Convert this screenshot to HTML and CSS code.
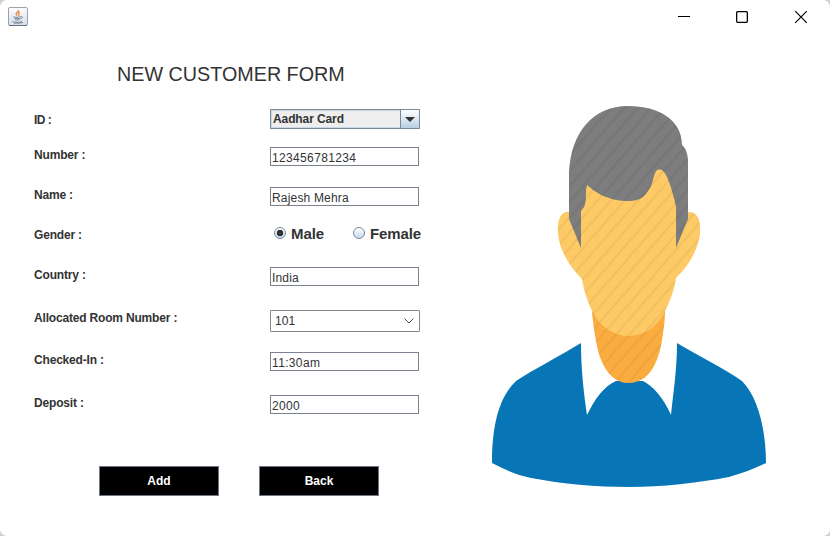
FILE: index.html
```html
<!DOCTYPE html>
<html lang="en">
<head>
<meta charset="utf-8">
<title>New Customer Form</title>
<link rel="stylesheet" href="styles.css">
</head>
<body>
<div class="window">
  <header class="titlebar">
    <svg class="java" width="20" height="20" viewBox="0 0 20 20" fill="none">
      <defs><linearGradient id="tile" x1="0" y1="0" x2="0" y2="1"><stop offset="0" stop-color="#fdfdfe"/><stop offset="1" stop-color="#d3dee8"/></linearGradient></defs>
      <rect x=".5" y=".5" width="19" height="18" rx="1.500" fill="url(#tile)" stroke="#9aa4ae"/>
      <path d="M1 18.500h18" stroke="#66737f"/>
      <path d="M10.500 3c.8 2-3.300 2.700-2.300 4.400l1 1.300M12 5c-2 .8-2.200 1.600-1.200 2.300.5.600.2 1-.6 1.500" stroke="#e88a42" stroke-width="1.300"/>
      <path d="M5.500 9.500c-1.500 1 6 1 7.300.1M6.300 11.300h5.800M7 12.900h4.500M12.800 9.600c2.500-.5 2.200 1.600-.4 2.200M4.500 14.400c0 1.300 8 1.300 9.500 0M6 16c3 .3 7 .2 9-.7" stroke="#768694"/>
    </svg>
    <svg class="controls" width="132" height="14" viewBox="0 0 132 14" fill="none" stroke="#000">
      <path d="M0 6.500h12"/>
      <rect x="58.650" y="1.650" width="10.700" height="10.700" rx="1" stroke-width="1.300"/>
      <path d="M117.200 1.200l11.600 11.600M128.800 1.200l-11.600 11.600" stroke-width="1.200"/>
    </svg>
  </header>
  <main class="content">
    <form class="form">
      <h1>NEW CUSTOMER FORM</h1>
      <div class="fields">
        <span class="label label-id">ID :</span>
        <div class="combo metal"><span>Aadhar Card</span><i><svg width="10" height="5" viewBox="0 0 10 5"><path d="M0 0h10L5 5z" fill="#333"/></svg></i></div>
        <span class="label">Number :</span><div class="input">123456781234</div>
        <span class="label">Name :</span><div class="input name">Rajesh Mehra</div>
        <span class="label">Gender :</span>
        <div class="radios">
          <span class="radio male"><i class="dot on"></i><b>Male</b></span>
          <span class="radio"><i class="dot"></i><b>Female</b></span>
        </div>
        <span class="label">Country :</span><div class="input name">India</div>
        <span class="label">Allocated Room Number :</span>
        <div class="combo native"><span>101</span><svg width="10" height="6" viewBox="0 0 10 6" fill="none" stroke="#555"><path d="M.5.5L5 5 9.500.5"/></svg></div>
        <span class="label">Checked-In :</span><div class="input">11:30am</div>
        <span class="label">Deposit :</span><div class="input">2000</div>
      </div>
      <div class="actions"><button type="button">Add</button><button type="button">Back</button></div>
    </form>
    <svg class="portrait" width="276" height="382" viewBox="491 105 276 382">
      <defs>
        <pattern id="stripes" width="10.200" height="10.200" patternUnits="userSpaceOnUse" patternTransform="rotate(41)"><path d="M0 0h2v10.200H0z" fill="#7b6030" opacity=".1"/></pattern>
        <pattern id="hair-stripes" width="10.200" height="10.200" patternUnits="userSpaceOnUse" patternTransform="rotate(41)"><path d="M0 0h2.500v10.200H0z" fill="#000" opacity=".05"/></pattern>
        <path id="neck" d="M592 304V312C593 322 594 331 596 341C598 352 600 358 603 364C608 375 617 383 628 383C641 383 650 375 655 364C660 354 662 341 663 334C664 326 665 319 665 312V304Z"/>
        <path id="face" d="M570 212C560 210 557 222 558 233C559 250 570 267 582 279C584 292 588 302 592 311C600 327 614 336 629 336C643 336 657 328 665 311C670 301 674 291 676 278C689 266 698 249 700 234C701 220 698 211 687 212L660 160H587Z"/>
        <path id="hair" d="M569 173C571 132 593 106 628 106C659 106 682 120 682 145C686 148 688 155 688 162V219L676 248V206C672 190 667 170 660 169.500C653 168 655 182 648 191C643 199 637 201 628 201C611 201 598 195 587 185C585 191 587 202 584 207L581 211V248L569 219Z"/>
      </defs>
      <path fill="#0875b7" d="M581 343C560 356 534 369 516 381C499 397 492 425 492 463C505 470 517 475 531 478C563 484 595 487 629 487C663 487 697 483 729 477C743 473 755 468 766 463C766 430 758 397 742 381C724 368 698 356 677 343C677 370 673 395 671 415C663 397 653 386 643 381H616C603 387 595 399 587 415C584 395 581 370 581 343Z"/>
      <use href="#neck" fill="#fbac3f"/>
      <use href="#neck" fill="url(#stripes)"/>
      <use href="#face" fill="#fdca66"/>
      <use href="#face" fill="url(#stripes)"/>
      <use href="#hair" fill="#7d7d7d"/>
      <use href="#hair" fill="url(#hair-stripes)"/>
    </svg>
  </main>
</div>
</body>
</html>
```
FILE: styles.css
```css
* { box-sizing: border-box; }
body { margin: 0; background: #d0d0d0; font: 12px/15px "Liberation Sans", Arial, sans-serif; color: #333; }
.window { width: 830px; height: 536px; background: #fff; border-radius: 7px; overflow: hidden; }
.titlebar { height: 34px; padding: 7px 20px 0 8px; display: flex; justify-content: space-between; }
.controls { margin: 3px 0 0; }
svg { display: block; }
.content { display: flex; padding-left: 34px; }
.form { width: 457px; }
h1 { margin: 28px 0 0 83px; font-size: 21px; line-height: 24px; font-weight: 400; white-space: nowrap; transform: scaleX(.94); transform-origin: left; }
.fields { margin-top: 23px; display: grid; grid-template-columns: 236px 151px; grid-template-rows: 38px 40px 40px 40px 43px 42px 43px 19px; align-items: start; }
.label { padding-top: 1px; font-weight: 700; letter-spacing: -.18px; white-space: nowrap; }
.label-id { padding-top: 4px; letter-spacing: -.5px; }
.input { width: 149px; height: 19px; padding: 2px 0 0 1px; border: 1px solid #7a8290; letter-spacing: .35px; line-height: 17px; white-space: nowrap; }
.name { letter-spacing: .18px; }
.combo { display: flex; width: 150px; }
.metal { height: 20px; border: 1px solid #7a8a99; background: #eee; font-weight: 700; line-height: 18px; letter-spacing: -.1px; box-shadow: inset 0 0 0 1px #c9d7e6; }
.metal span { flex: 1; padding-left: 2px; }
.metal i { width: 19px; border-left: 1px solid #7a8a99; background: linear-gradient(#fff, #b8cfe5); display: flex; align-items: center; justify-content: center; }
.native { height: 22px; border: 1px solid #868686; border-radius: 1px; align-items: center; justify-content: space-between; padding: 0 5px 0 4px; letter-spacing: .1px; }
.radios { display: flex; padding-left: 4px; }
.radio { display: flex; gap: 5px; font-size: 15px; line-height: 14px; letter-spacing: -.1px; }
.male { width: 79px; }
.dot { width: 12px; height: 12px; flex: none; border: 1px solid #7a8a99; border-radius: 50%; background: linear-gradient(#fff, #c5d8eb); }
.dot.on { background: radial-gradient(circle, #333 0 3px, transparent 3.600px), linear-gradient(#fff, #c5d8eb); }
.actions { display: flex; gap: 40px; margin: 52px 0 0 65px; }
button { width: 120px; height: 30px; padding: 0; background: #000; color: #fff; border: 1px solid #6d7782; font: 700 12px/15px "Liberation Sans", Arial, sans-serif; }
.portrait { margin-top: 71px; }
```
